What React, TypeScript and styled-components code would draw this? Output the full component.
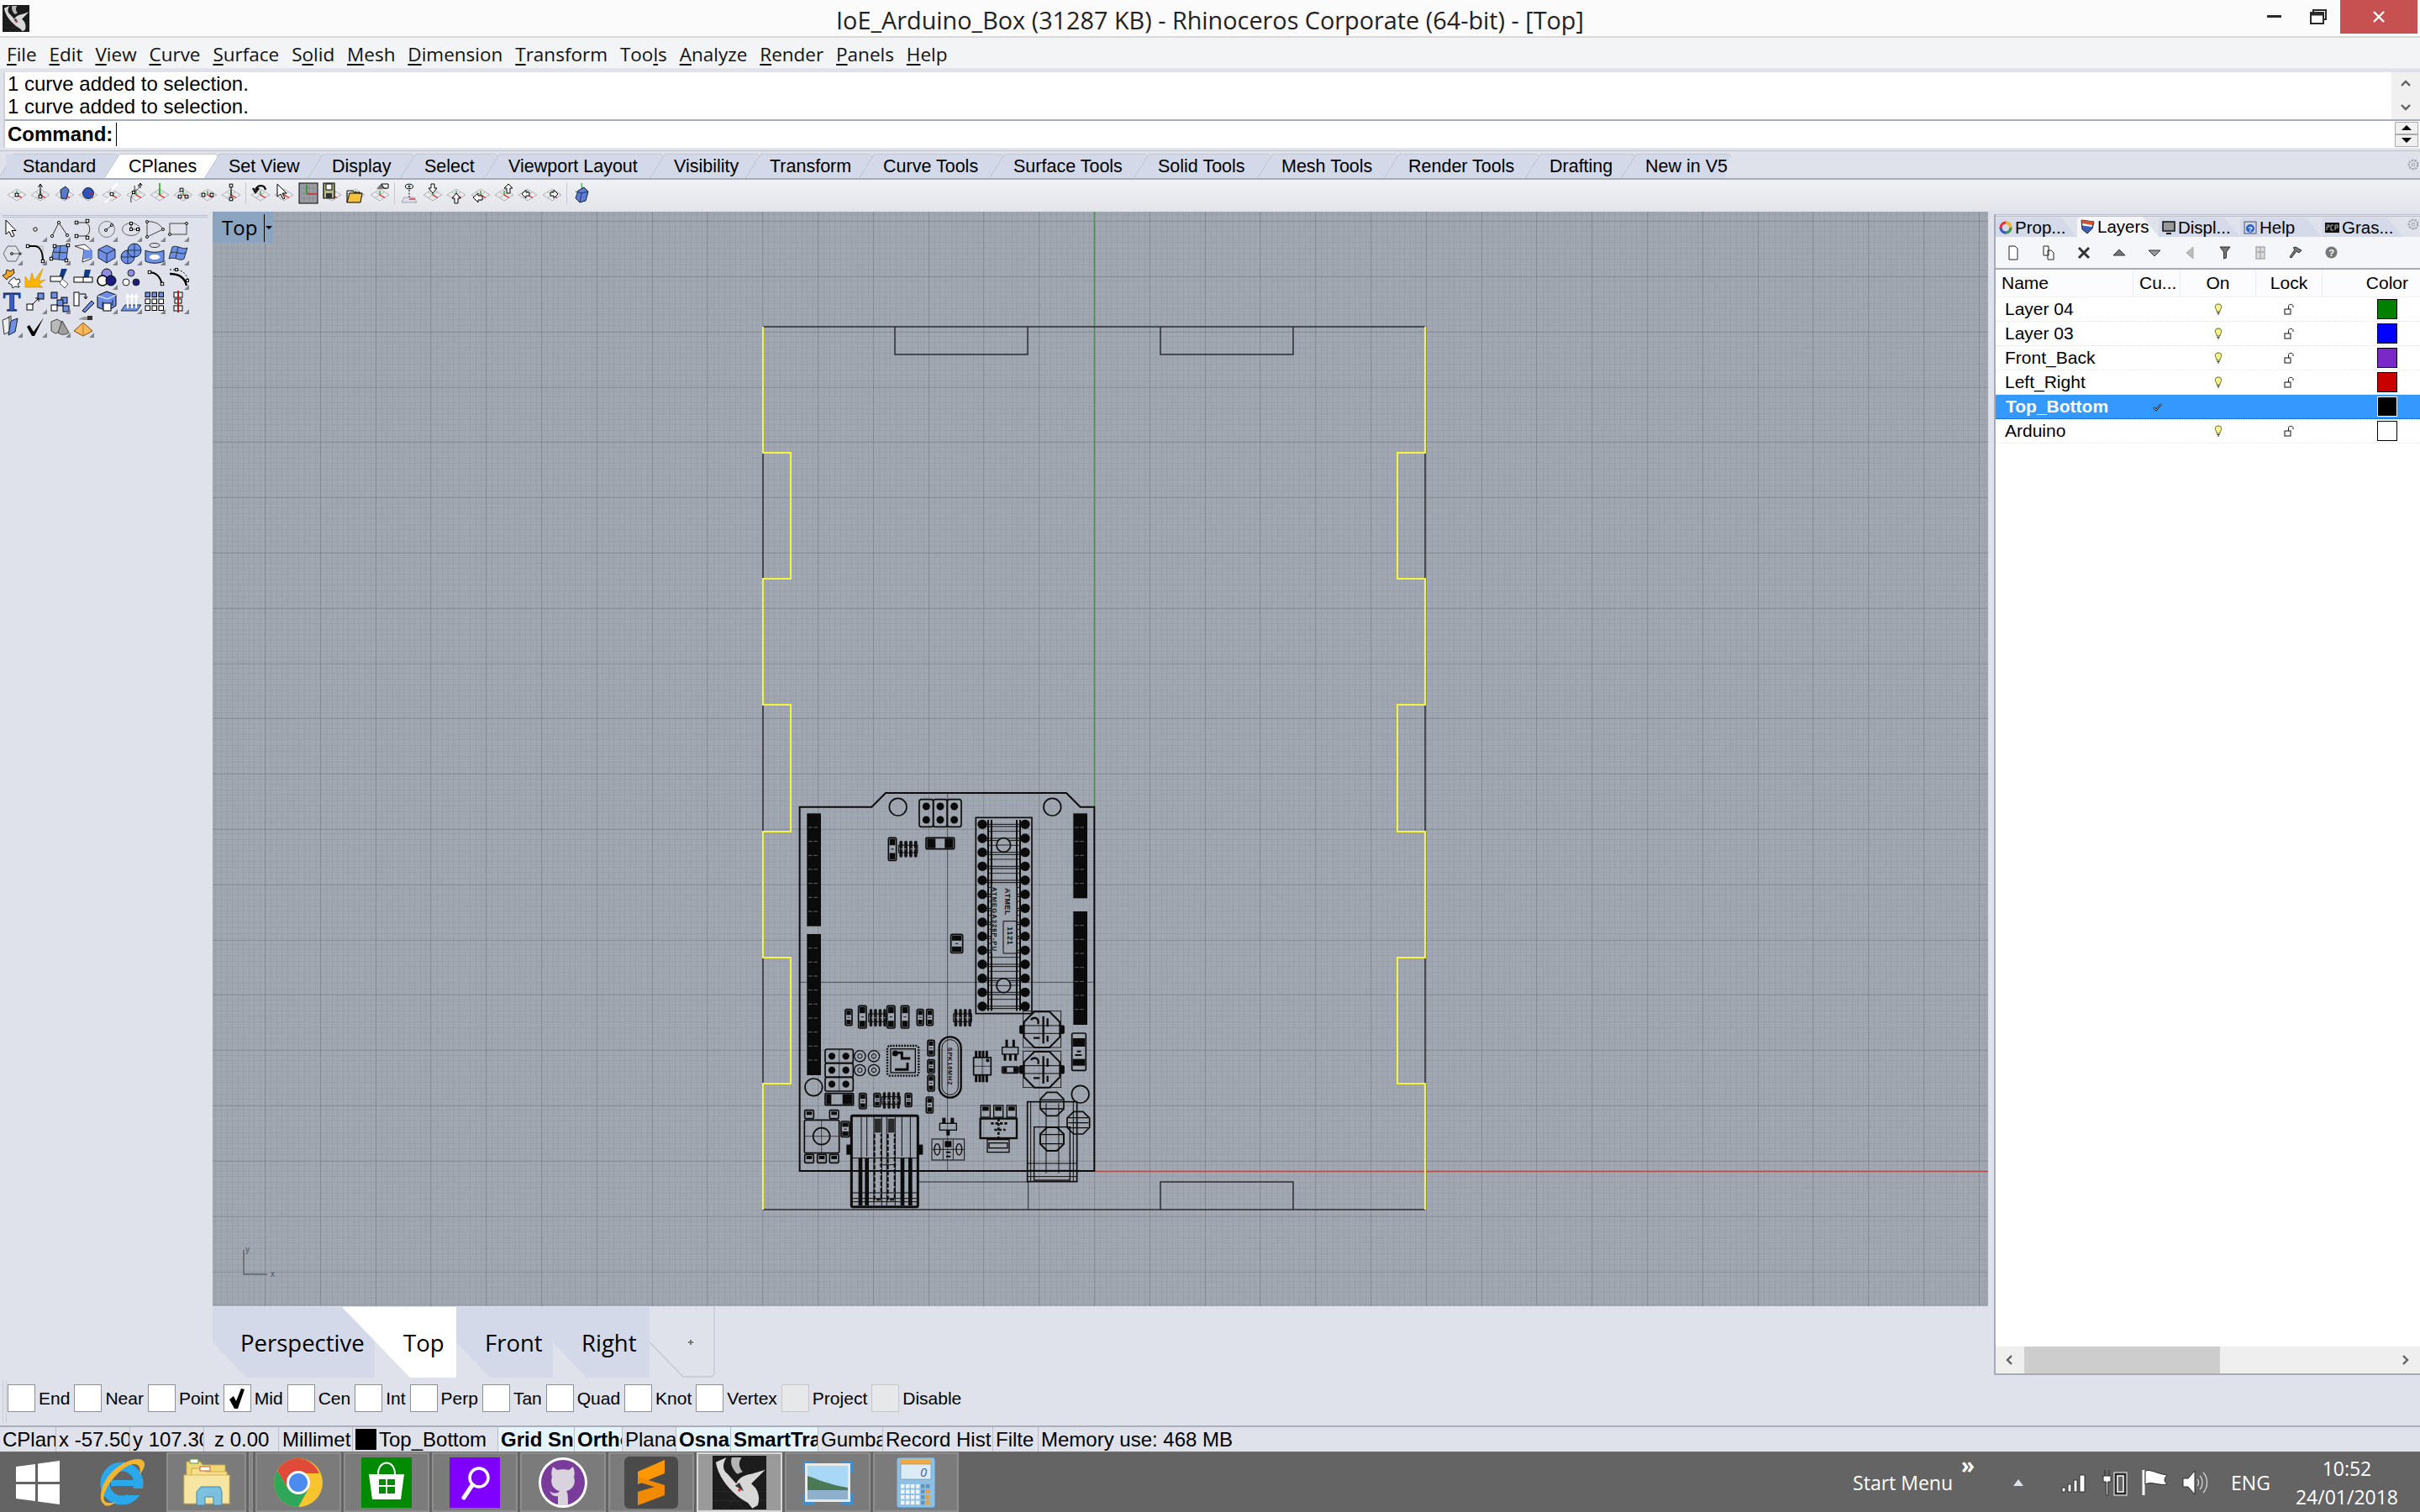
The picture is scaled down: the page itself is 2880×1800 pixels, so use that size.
import React from 'react';
import styled, { createGlobalStyle } from 'styled-components';

const GlobalStyle = createGlobalStyle`
  html, body {
    margin: 0;
    padding: 0;
    background: #dfe2ea;
    overflow: hidden;
  }
  * { box-sizing: border-box; }
`;

const Root = styled.div`
  display: flex;
  flex-direction: column;
  width: 2880px;
  height: 1800px;
  background: #dfe2ea;
  font-family: "Liberation Sans", Arial, sans-serif;
  color: #000;
  overflow: hidden;
`;

/* ---------- window chrome ---------- */
const TitleBar = styled.header`
  display: grid;
  grid-template-columns: 1fr auto 1fr;
  align-items: center;
  height: 45px;
  background: #fbfbfb;
  border-bottom: 2px solid #d8d8d8;
`;
const TitleLeft = styled.div`
  display: flex;
  padding-left: 3px;
`;
const TitleText = styled.div`
  font-family: "Open Sans", sans-serif;
  font-size: 28.8px;
  color: #222;
  white-space: nowrap;
  margin-top: 3px;
`;
const WindowButtons = styled.div`
  display: flex;
  justify-content: flex-end;
  align-self: start;
  padding-right: 3px;
`;
const WindowButton = styled.div<{ $close?: boolean }>`
  display: flex;
  align-items: center;
  justify-content: center;
  width: ${p => (p.$close ? '92px' : '52px')};
  height: 40px;
  background: ${p => (p.$close ? '#c75050' : 'transparent')};
`;

const MenuBar = styled.nav`
  display: flex;
  align-items: center;
  gap: 14.9px;
  height: 37px;
  padding: 2px 0 0 8px;
  background: #f3f4f6;
  border-bottom: 1px solid #e9e9e6;
  font-family: "Open Sans", sans-serif;
  font-size: 22.5px;
  color: #111;
`;
const MenuItem = styled.span`
  white-space: nowrap;
  u { text-underline-offset: 3px; }
`;

const CommandArea = styled.section`
  margin: 4px 0 0 4px;
  border-left: 2px solid #ccd0d8;
  background: #fff;
  height: 90px;
  display: flex;
  flex-direction: column;
`;
const History = styled.div`
  display: flex;
  height: 56px;
`;
const HistoryLines = styled.div`
  flex: 1;
  font-size: 24px;
  line-height: 27px;
  padding: 0 0 0 3px;
`;
const HistoryScroll = styled.div`
  width: 34px;
  background: #f0f0f0;
  display: flex;
  flex-direction: column;
  align-items: center;
  justify-content: space-around;
`;
const CommandLine = styled.div`
  display: flex;
  align-items: center;
  height: 33px;
  border-top: 2px solid #a8aeb8;
  padding-left: 3px;
  font-size: 24px;
  font-weight: 700;
`;
const Caret = styled.span`
  width: 1px;
  height: 28px;
  background: #000;
  margin-left: 4px;
`;
const Spinner = styled.div`
  margin-left: auto;
  margin-right: 2px;
  display: flex;
  flex-direction: column;
  width: 28px;
  height: 30px;
  border: 1px solid #adadad;
  background: #f0f0f0;
`;
const SpinHalf = styled.div<{ $down?: boolean }>`
  flex: 1;
  display: flex;
  align-items: center;
  justify-content: center;
  border-top: ${p => (p.$down ? '2px solid #adadad' : 'none')};
  &::after {
    content: '';
    border-left: 6px solid transparent;
    border-right: 6px solid transparent;
    ${p => (p.$down ? 'border-top: 6px solid #000;' : 'border-bottom: 6px solid #000;')}
  }
`;

const TabRow = styled.div`
  display: flex;
  align-items: flex-end;
  height: 38px;
  padding-left: 7px;
  padding-right: 4px;
  border-top: 3px solid #e1e4ea;
  border-bottom: 2px solid #a6acb8;
  background: #dfe2ea;
  position: relative;
  box-shadow: inset 0 1px 0 #bcc0cb;
`;
const RibbonTab = styled.div<{ $active?: boolean; $w: number; $square?: 'first' | 'last' }>`
  position: relative;
  display: flex;
  align-items: center;
  width: ${p => p.$w}px;
  height: 29px;
  padding: 2px 0 0 20px;
  font-size: 21.5px;
  white-space: nowrap;
  z-index: ${p => (p.$active ? 2 : 1)};
  &::before {
    content: '';
    position: absolute;
    inset: 0;
    transform: skewX(-32deg);
    background: ${p => (p.$active ? '#fff' : '#d3d9e8')};
    border-left: 1px solid #aab0c0;
    border-top: 1px solid #c4c9d6;
    border-top-right-radius: 5px;
    z-index: -1;
  }
  ${p =>
    p.$square
      ? `&::after {
          content: '';
          position: absolute;
          top: 1px;
          bottom: 0;
          width: 16px;
          background: #d3d9e8;
          z-index: -1;
          ${p.$square === 'first' ? 'left: 0;' : 'right: 0;'}
        }`
      : ''}
`;
const RibbonGear = styled.div`
  position: absolute;
  right: 0;
  top: 9px;
  display: flex;
`;

const Toolbar = styled.div`
  display: flex;
  align-items: center;
  height: 38px;
  padding: 0 0 6px 6px;
  background: linear-gradient(#f0f1f4, #e2e4ea);
`;
const ToolCell = styled.div`
  width: 28.3px;
  height: 26px;
  display: flex;
  align-items: center;
  justify-content: center;
`;
const ToolSep = styled.div`
  width: 1px;
  height: 26px;
  margin: 0 3px;
  background: #c5c8d0;
`;

/* ---------- main ---------- */
const Main = styled.main`
  display: flex;
  height: 1388px;
`;
const LeftPanel = styled.aside`
  width: 253px;
  padding: 4px 0 0 0;
`;
const GripLine = styled.div`
  width: 244px;
  margin-left: 3px;
  height: 3px;
  border-top: 1px solid #bbbfc9;
  border-bottom: 1px solid #bbbfc9;
`;
const ToolGrid = styled.div`
  display: grid;
  grid-template-columns: repeat(8, 28.3px);
  grid-auto-rows: 28.7px;
`;
const PanelTool = styled.div<{ $flyout?: boolean }>`
  position: relative;
  display: flex;
  align-items: center;
  justify-content: center;
  ${p =>
    p.$flyout
      ? `&::after {
          content: '';
          position: absolute;
          right: 1px;
          bottom: 0;
          border-left: 6px solid transparent;
          border-bottom: 6px solid #80838a;
        }`
      : ''}
`;

const Center = styled.div`
  display: flex;
  flex-direction: column;
  width: 2113px;
`;
const Viewport = styled.div`
  position: relative;
  height: 1303px;
  background-color: #a0a7b0;
  background-image:
    repeating-linear-gradient(90deg, transparent 0 62px, rgba(60, 64, 72, 0.22) 62px 63px, transparent 63px 65.8px),
    repeating-linear-gradient(0deg, transparent 0 40.5px, rgba(60, 64, 72, 0.22) 40.5px 41.5px, transparent 41.5px 65.8px),
    repeating-linear-gradient(90deg, transparent 0 3.4px, rgba(70, 76, 86, 0.08) 3.4px 4.4px, transparent 4.4px 6.58px),
    repeating-linear-gradient(0deg, transparent 0 2.4px, rgba(70, 76, 86, 0.08) 2.4px 3.4px, transparent 3.4px 6.58px);
  overflow: hidden;
`;
const ViewLabel = styled.div`
  position: absolute;
  left: 0;
  top: 0;
  width: 72px;
  height: 37px;
  background: #8ba4c0;
  border-bottom-right-radius: 4px;
  display: flex;
  align-items: center;
  padding-left: 11px;
  font-family: "Open Sans", sans-serif;
  font-size: 24px;
  color: #000;
`;
const LabelBar = styled.span`
  position: absolute;
  left: 61px;
  top: 3px;
  width: 1px;
  height: 33px;
  background: #000;
`;
const LabelArrow = styled.span`
  position: absolute;
  left: 63px;
  top: 17px;
  border-left: 4px solid transparent;
  border-right: 4px solid transparent;
  border-top: 4px solid #000;
`;
const CadCanvas = styled.svg`
  position: absolute;
  left: 0;
  top: 0;
  display: block;
`;

const ViewTabs = styled.div`
  display: flex;
  height: 85px;
  padding-top: 1px;
`;
const ViewTab = styled.div<{ $kind: 'first' | 'active' | 'plain' }>`
  position: relative;
  display: flex;
  align-items: center;
  height: 84px;
  font-family: "Open Sans", sans-serif;
  font-size: 27.5px;
  white-space: nowrap;
  background: ${p => (p.$kind === 'active' ? '#fff' : '#d3d9e8')};
  ${p =>
    p.$kind === 'first'
      ? `width: 193px; padding-left: 33px; clip-path: polygon(0 0, 100% 0, 100% 100%, 40px 100%, 0 42px);`
      : p.$kind === 'active'
        ? `width: 136px; margin-left: -39px; padding-left: 73px; z-index: 2; clip-path: polygon(0 0, 100% 0, 100% 100%, 81px 100%);`
        : `width: 115px; padding-left: 34px; clip-path: polygon(0 0, 100% 0, 100% 100%, 40px 100%, 0 42px);`}
`;
const PlusTab = styled.svg`
  display: block;
  width: 78px;
  height: 84px;
`;

const RightPanel = styled.aside`
  display: flex;
  flex-direction: column;
  width: 507px;
  margin-left: 7px;
  margin-top: 3px;
  height: 1382px;
  border-left: 2px solid #a5abb8;
  border-bottom: 2px solid #a5abb8;
  border-top: 0;
  position: relative;
`;
const PanelTabs = styled.div`
  display: flex;
  height: 27px;
  padding-top: 0;
  background: #dfe2ea;
  border-top: 3px double #bbbfc9;
  align-items: flex-end;
`;
const PanelTab = styled.div<{ $active?: boolean }>`
  position: relative;
  display: flex;
  align-items: center;
  gap: 3px;
  width: 97px;
  height: ${p => (p.$active ? '24px' : '23px')};
  padding-left: 4px;
  font-size: 20.5px;
  white-space: nowrap;
  background: ${p => (p.$active ? '#f5f6f9' : '#d5daea')};
  clip-path: polygon(0 3px, 3px 0, 78px 0, 100% 100%, 0 100%);
`;
const PanelGear = styled.div`
  position: absolute;
  right: 0;
  top: 4px;
  display: flex;
`;
const PanelTools = styled.div`
  display: flex;
  align-items: center;
  height: 39px;
  background: #f5f6f9;
  border-bottom: 2px solid #a5abb8;
`;
const PanelToolCell = styled.div`
  width: 42px;
  display: flex;
  justify-content: center;
  align-items: center;
`;
const LayerTable = styled.div`
  flex: 1;
  background: #fff;
`;
const LayerRow = styled.div<{ $header?: boolean; $selected?: boolean }>`
  display: grid;
  grid-template-columns: 164px 56px 90px 79px 116px;
  align-items: center;
  height: ${p => (p.$header ? '33px' : '29px')};
  font-size: 21px;
  background: ${p => (p.$selected ? '#3399ff' : p.$header ? '#fcfcfe' : '#fff')};
  color: ${p => (p.$selected ? '#fff' : '#000')};
  border-bottom: ${p => (p.$header ? '1px solid #eef0f5' : p.$selected ? '1px dotted #16407a' : '1px dotted #e4e4e4')};
  white-space: nowrap;
`;
const HeadCell = styled.div<{ $align?: string; $pad?: string }>`
  height: 100%;
  display: flex;
  align-items: center;
  justify-content: ${p => p.$align || 'flex-start'};
  padding: ${p => p.$pad || '0'};
  border-right: 1px solid #e8eef6;
  &:last-child { border-right: 0; }
`;
const NameCell = styled.div<{ $selected?: boolean }>`
  padding-left: 11px;
  ${p => (p.$selected ? 'font-weight: 700; padding-left: 12px;' : '')}
`;
const IconCell = styled.div`
  display: flex;
  justify-content: center;
  align-items: center;
`;
const ColorCell = styled.div`
  display: flex;
  justify-content: flex-end;
  padding-right: 27px;
`;
const Swatch = styled.div<{ $color: string; $light?: boolean }>`
  width: 24px;
  height: 24px;
  background: ${p => p.$color};
  border: 1px solid ${p => (p.$light ? '#fff' : '#000')};
`;
const HScroll = styled.div`
  display: flex;
  align-items: center;
  height: 32px;
  background: #efefef;
  margin-top: auto;
`;
const HArrow = styled.div`
  width: 34px;
  display: flex;
  justify-content: center;
`;
const HThumb = styled.div`
  width: 233px;
  height: 32px;
  background: #cdcdcd;
  margin-right: auto;
`;

/* ---------- osnap / status ---------- */
const OsnapRow = styled.div`
  position: relative;
  display: flex;
  align-items: center;
  height: 57px;
  padding: 0 0 8px 9px;
  font-size: 21px;
  &::before {
    content: '';
    position: absolute;
    left: 3px;
    top: 3px;
    bottom: 3px;
    width: 3px;
    border-left: 1px solid #c8ccd5;
    border-right: 1px solid #c8ccd5;
  }
`;
const SnapItem = styled.div`
  display: flex;
  align-items: center;
  gap: 4px;
  margin-right: 5px;
  white-space: nowrap;
`;
const SnapBox = styled.div<{ $disabled?: boolean }>`
  display: flex;
  align-items: center;
  justify-content: center;
  width: 33px;
  height: 33px;
  background: ${p => (p.$disabled ? '#e7e8ea' : '#fff')};
  border: 1px solid ${p => (p.$disabled ? '#c5c7cb' : '#8d9097')};
`;
const StatusBar = styled.div`
  display: flex;
  height: 31px;
  border-top: 2px solid #a9aeba;
  font-size: 24px;
  align-items: stretch;
`;
const StatusCell = styled.div<{ $w?: number; $on?: boolean; $fill?: boolean; $pad?: number }>`
  display: flex;
  align-items: center;
  gap: 3px;
  width: ${p => (p.$w ? `${p.$w}px` : 'auto')};
  flex: ${p => (p.$fill ? 1 : 'none')};
  padding-left: ${p => p.$pad ?? 3}px;
  overflow: hidden;
  white-space: nowrap;
  background: ${p => (p.$on ? '#e5f3fb' : 'transparent')};
  font-weight: ${p => (p.$on ? 700 : 400)};
  border-right: ${p => (p.$fill ? '0' : '1px solid #b9bdc8')};
`;
const LayerChip = styled.span`
  flex: none;
  width: 25px;
  height: 25px;
  background: #000;
`;

/* ---------- taskbar ---------- */
const Taskbar = styled.footer`
  display: flex;
  align-items: stretch;
  height: 72px;
  background: #646464;
  border-top: 1px solid #6f6f6f;
  padding-right: 26px;
`;
const TaskSlot = styled.div<{ $w: number }>`
  display: flex;
  align-items: center;
  justify-content: center;
  width: ${p => p.$w}px;
  padding-right: 6px;
`;
const TaskButton = styled.div<{ $w?: number; $active?: boolean; $gap?: number }>`
  display: flex;
  align-items: center;
  justify-content: center;
  width: ${p => p.$w || 102}px;
  margin-right: ${p => (p.$gap === undefined ? 3 : p.$gap)}px;
  background: ${p => (p.$active ? '#9a9a9a' : '#7b7b7b')};
  border: 2px solid ${p => (p.$active ? '#d8d8d8' : '#8e8e8e')};
`;
const Tray = styled.div`
  display: flex;
  align-items: center;
  margin-left: auto;
  color: #fff;
  font-family: "Open Sans", sans-serif;
  font-size: 23px;
`;
const TrayText = styled.span<{ $gap?: number }>`
  margin-right: ${p => p.$gap || 0}px;
  white-space: nowrap;
`;
const TrayChevron = styled.span`
  align-self: flex-start;
  margin: 2px 45px 0 10px;
  font-size: 26px;
  line-height: 26px;
  font-weight: 700;
`;
const TrayIcon = styled.div<{ $gap?: number }>`
  display: flex;
  margin-right: ${p => p.$gap || 0}px;
`;
const Clock = styled.div`
  display: flex;
  flex-direction: column;
  align-items: center;
  line-height: 34px;
  font-size: 23px;
`;

/* ---------- tile icons in the CPlanes toolbar ---------- */
const Tile = ({ children, plain }: { children?: React.ReactNode; plain?: boolean }) => (
  <svg width="24" height="26" viewBox="0 0 24 26">
    {!plain && (
      <g stroke="#9a9a9a" strokeWidth="0.7" fill="none">
        <path d="M1 15 L12 8 L23 15 L12 22 Z" />
        <path d="M6.5 11.5 L17.5 18.5 M12 8 L12 8 M6.5 18.5 L17.5 11.5" />
      </g>
    )}
    {!plain && (
      <g strokeWidth="1.2" fill="none">
        <path d="M12 15 L18 18.5" stroke="#d22" />
        <path d="M12 15 L12 10" stroke="#191" />
      </g>
    )}
    {children}
  </svg>
);
const sq = (x: number, y: number, s = 3.6) => (
  <rect x={x - s / 2} y={y - s / 2} width={s} height={s} fill="#fff" stroke="#000" strokeWidth="1" />
);

const toolbarGroups: React.ReactNode[][] = [
  [
    <Tile key="a">{sq(12, 15)}</Tile>,
    <Tile key="b"><path d="M12 15 V3 M9.5 6 L12 2 L14.5 6" stroke="#000" fill="none" />{sq(12, 17)}</Tile>,
    <Tile key="c"><path d="M7 9 L13 5 L17 9 L14 20 L8 19 Z" fill="#5a79c9" stroke="#123" strokeWidth="1" /></Tile>,
    <Tile key="d"><circle cx="12" cy="13" r="6.5" fill="#2d52b8" stroke="#123" /><path d="M12 13 h7" stroke="#d22" /></Tile>,
    <Tile key="e"><path d="M19 2 C8 8 16 16 4 24" stroke="#fff" strokeWidth="2.4" fill="none" />{sq(12, 14)}</Tile>,
    <Tile key="f"><path d="M6 24 C4 14 12 12 10 4 M11 10 C16 8 16 5 14 3" stroke="#333" fill="none" />{sq(9, 12, 3)}<path d="M17 7 V2 M15 4 L17 1 L19 4" stroke="#000" fill="none" /></Tile>,
    <Tile key="g"><path d="M12 15 V1" stroke="#191" strokeWidth="1.4" />{' '}</Tile>,
    <Tile key="h">{sq(10, 9)}{sq(8, 17)}{sq(16, 17)}</Tile>,
    <Tile key="i">{sq(7, 15)}{sq(17, 15)}</Tile>,
    <Tile key="j">{sq(12, 4)}{sq(12, 20)}<path d="M12 6 V18" stroke="#000" /></Tile>,
  ],
  [
    <Tile key="k"><path d="M6 9 C9 2 17 3 18 9 M3 7 L6 12 L10 7" stroke="#111" strokeWidth="2.4" fill="none" /></Tile>,
    <Tile key="l"><path d="M4 2 V17 L8 14 L11 20 L13 19 L10 13 L15 13 Z" fill="#fff" stroke="#000" /></Tile>,
    <Tile key="m" plain><rect x="1" y="1" width="22" height="24" fill="#9a9ea4" stroke="#000" /><path d="M1 7 H23 M1 13 H23 M1 19 H23 M7 1 V25 M13 1 V25 M18 1 V25" stroke="#808389" strokeWidth="0.6" /><path d="M10 14 H22" stroke="#d22" strokeWidth="1.4" /><path d="M10 14 V3" stroke="#191" strokeWidth="1.4" /></Tile>,
    <Tile key="n"><path d="M2 1 H15 V19 H2 Z" fill="#b8b88a" stroke="#000" strokeWidth="1.2" /><rect x="5" y="2" width="7" height="7" fill="#fff" stroke="#000" /><rect x="5" y="13" width="7" height="6" fill="#333" /></Tile>,
    <Tile key="o"><path d="M2 24 L5 13 H20 L18 24 Z" fill="#f5c33b" stroke="#000" /><path d="M2 24 V10 H9 L10 12 H17 V14" fill="none" stroke="#000" /></Tile>,
    <Tile key="p"><path d="M8 8 L13 2 L22 3 L20 8 Z" fill="#777" /><path d="M14 2 L22 2 L22 7 L17 7 Z" fill="#fff" stroke="#000" /></Tile>,
  ],
  [
    <Tile key="q" plain><ellipse cx="12" cy="5" rx="4.5" ry="2.8" fill="#fff" stroke="#000" /><circle cx="12" cy="5" r="1.6" fill="#246" /><path d="M12 9 V20" stroke="#000" strokeDasharray="2 1.5" /><path d="M3 24 L6 18 H18 L21 24 Z" stroke="#888" fill="#dde" strokeWidth="0.7" /><path d="M12 20 H19" stroke="#d22" strokeWidth="1.3" /></Tile>,
    <Tile key="r"><path d="M10 2 H14 V7 H17 L12 13 L7 7 H10 Z" fill="#fff" stroke="#000" /></Tile>,
    <Tile key="s"><path d="M12 13 L7 19 H10 V25 H14 V19 H17 Z" fill="#fff" stroke="#000" /></Tile>,
    <Tile key="t"><path d="M3 18 L9 13 V16 H14 V21 H9 V24 Z" fill="#fff" stroke="#000" /></Tile>,
    <Tile key="u"><path d="M17 2 L22 7 L19 7 L19 13 L15 13 L15 7 L12 7 Z" fill="#fff" stroke="#000" /></Tile>,
    <Tile key="v"><path d="M5 14 L10 9 V12 H14 V16 H10 V19 Z" fill="#fff" stroke="#000" /></Tile>,
    <Tile key="w"><path d="M19 14 L14 9 V12 H10 V16 H14 V19 Z" fill="#fff" stroke="#000" /></Tile>,
  ],
  [
    <Tile key="x" plain><path d="M12 1 L13 12" stroke="#191" /><path d="M12 9 L20 14" stroke="#d22" /><path d="M8 10 L15 6 L20 11 L17 22 L10 24 L5 19 Z" fill="#5e7ed6" stroke="#123" /><path d="M10 24 L12 13 L20 11 M12 13 L5 11" stroke="#123" strokeWidth="0.8" fill="none" /></Tile>,
  ],
];

/* ---------- left panel icons ---------- */
const P = ({ children }: { children: React.ReactNode }) => (
  <svg width="26" height="26" viewBox="0 0 26 26">{children}</svg>
);
const blue = '#6e8fe6';
const panelTools: { icon: React.ReactNode; flyout: boolean }[] = [
  { flyout: false, icon: <P><path d="M6 2 V19 L10 15.5 L13 22 L16 20.5 L13 14.5 L18 14.5 Z" fill="#fff" stroke="#000" /></P> },
  { flyout: true, icon: <P><circle cx="13" cy="13" r="2.2" fill="#fff" stroke="#000" /></P> },
  { flyout: true, icon: <P><path d="M4 21 L12 5 L22 20" fill="none" stroke="#333" /><circle cx="4" cy="21" r="1.6" fill="#fff" stroke="#000" /><circle cx="12" cy="5" r="1.6" fill="#fff" stroke="#000" /><circle cx="22" cy="20" r="1.6" fill="#fff" stroke="#000" /></P> },
  { flyout: true, icon: <P><path d="M5 5 H14 C23 5 23 21 14 21 H5" fill="none" stroke="#333" />{sq(5, 5, 3.4)}{sq(5, 21, 3.4)}{sq(18, 3, 3.4)}{sq(18, 23, 3.4)}</P> },
  { flyout: true, icon: <P><circle cx="13" cy="13" r="9.5" fill="none" stroke="#777" /><path d="M12 14 L19 8" stroke="#333" /><circle cx="12" cy="14" r="1.5" fill="#fff" stroke="#000" /><circle cx="19" cy="8" r="1.5" fill="#fff" stroke="#000" /></P> },
  { flyout: true, icon: <P><ellipse cx="13" cy="13" rx="10.5" ry="7.5" fill="none" stroke="#666" /><path d="M13 6 V13 H22" stroke="#333" fill="none" />{sq(13, 6, 3)}{sq(13, 13, 3)}{sq(21, 13, 3)}</P> },
  { flyout: true, icon: <P><path d="M4 4 V22 L23 13 C19 6 12 3 4 4 Z" fill="none" stroke="#444" /><circle cx="4" cy="4" r="1.5" fill="#fff" stroke="#000" /><circle cx="4" cy="22" r="1.5" fill="#fff" stroke="#000" /><circle cx="23" cy="13" r="1.5" fill="#fff" stroke="#000" /></P> },
  { flyout: true, icon: <P><rect x="3" y="6" width="20" height="13" fill="none" stroke="#444" /><circle cx="3" cy="19" r="1.5" fill="#fff" stroke="#000" /><circle cx="23" cy="6" r="1.5" fill="#fff" stroke="#000" /></P> },

  { flyout: true, icon: <P><path d="M8 4 H18 L23 13 L18 22 H8 L3 13 Z" fill="none" stroke="#666" /><path d="M13 13 H23" stroke="#555" /><circle cx="13" cy="13" r="1.4" fill="#fff" stroke="#000" /><circle cx="23" cy="13" r="1.2" fill="#fff" stroke="#000" /></P> },
  { flyout: true, icon: <P><path d="M4 4 H22 V22" fill="none" stroke="#aaa" /><path d="M4 4 H12 C19 4 22 12 22 22" fill="none" stroke="#000" strokeWidth="2" />{sq(4, 4, 3.4)}{sq(22, 22, 3.4)}</P> },
  { flyout: true, icon: <P><path d="M7 4 L23 3 L21 21 L3 19 Z" fill={blue} stroke="#233" /><path d="M14 3 L12 20 M5 11 L22 12" stroke="#233" />{sq(7, 4, 3.4)}{sq(23, 3, 3.4)}{sq(21, 21, 3.4)}{sq(3, 19, 3.4)}</P> },
  { flyout: true, icon: <P><path d="M3 4 L15 2 L23 9 L23 19 L12 23 L14 8 Z" fill="#fff" stroke="#333" /><path d="M14 8 L23 9 V18 L13 20 Z" fill={blue} /></P> },
  { flyout: true, icon: <P><path d="M13 3 L23 8 V18 L13 24 L3 18 V8 Z" fill={blue} stroke="#223" /><path d="M3 8 L13 13 L23 8 M13 13 V24" stroke="#223" fill="none" /></P> },
  { flyout: true, icon: <P><circle cx="9" cy="17" r="8" fill={blue} stroke="#123" /><circle cx="17" cy="9" r="8" fill={blue} stroke="#123" /><path d="M1 17 H17 M9 9 V25 M9 9 H25 M17 1 V17" stroke="#123" strokeWidth="0.8" /></P> },
  { flyout: true, icon: <P><ellipse cx="13" cy="3" rx="6" ry="2.5" fill="none" stroke="#333" /><path d="M2 9 C8 12 18 12 24 9 V22 C18 25 8 25 2 22 Z" fill={blue} stroke="#123" /><ellipse cx="13" cy="17" rx="6" ry="2.5" fill="#fff" stroke="#fff" /></P> },
  { flyout: true, icon: <P><path d="M6 5 C12 2 18 9 24 6 L20 19 C15 23 10 16 2 19 Z" fill={blue} stroke="#233" /><path d="M13 5 L10 18 M4 12 C10 9 16 15 22 12" stroke="#233" fill="none" /></P> },

  { flyout: false, icon: <P><path d="M2 10 L6 8 L7 3 L12 5 L15 2 L16 7 L12 11 L9 12 L7 15 Z" fill="#f5a623" stroke="#222" /><path d="M12 15 L16 12 L18 15 L22 14 L23 18 L20 20 L22 24 L17 23 L14 25 L13 21 L9 19 Z" fill="#fff" stroke="#222" /></P> },
  { flyout: false, icon: <P><path d="M1 24 L1 11 L6 18 L9 7 L12 16 L22 2 L17 17 L25 15 L17 21 L22 24 Z" fill="#ffb400" stroke="#c98c00" strokeWidth="0.6" /></P> },
  { flyout: false, icon: <P><path d="M15 2 H22 L17 14 H12 Z" fill="#123a86" /><rect x="2" y="11" width="14" height="6" fill="#fff" stroke="#000" /><path d="M16 14 L23 20 L19 25 L13 19 Z" fill="#fff" stroke="#555" /></P> },
  { flyout: false, icon: <P><path d="M15 3 H22 L19 14 H13 Z" fill="#123a86" /><rect x="2" y="12" width="22" height="6" fill="#fff" stroke="#000" /><path d="M13 12 V18" stroke="#000" /></P> },
  { flyout: true, icon: <P><circle cx="13" cy="8" r="6" fill="#8d8de6" stroke="#000" /><circle cx="8" cy="16" r="6" fill="#fff" stroke="#000" strokeWidth="1.6" /><circle cx="18" cy="16" r="6" fill="#1b1b80" stroke="#000" /></P> },
  { flyout: false, icon: <P><circle cx="13" cy="7" r="4" fill="#8d8de6" stroke="#222" /><circle cx="7" cy="18" r="4" fill="#fff" stroke="#222" /><circle cx="19" cy="18" r="4" fill="#1b1b80" stroke="#222" /></P> },
  { flyout: false, icon: <P><path d="M6 6 C15 6 20 12 22 21" fill="none" stroke="#000" strokeWidth="2" />{sq(7, 6, 3.4)}{sq(22, 20, 3.4)}</P> },
  { flyout: true, icon: <P><path d="M3 8 C14 8 21 13 23 22" fill="none" stroke="#000" strokeWidth="2.4" /><path d="M3 3 H9 M12 3 C20 5 24 10 25 17" fill="none" stroke="#000" strokeDasharray="2 2" />{sq(11, 3, 3)}{sq(24, 16, 3)}</P> },

  { flyout: false, icon: <P><text x="13" y="24" textAnchor="middle" fontFamily="'Liberation Serif', serif" fontWeight="700" fontSize="31" fill="#3b5ec0" stroke="#0a1a50" strokeWidth="0.8">T</text></P> },
  { flyout: true, icon: <P><rect x="16" y="3" width="7" height="7" fill={blue} stroke="#000" /><rect x="3" y="16" width="7" height="7" fill="#fff" stroke="#000" /><path d="M9 17 L17 9 M13 9 H17 V13" fill="none" stroke="#000" /></P> },
  { flyout: true, icon: <P><rect x="3" y="2" width="7" height="7" fill={blue} stroke="#000" /><rect x="15" y="8" width="7" height="7" fill={blue} stroke="#000" /><rect x="10" y="11" width="7" height="7" fill={blue} stroke="#000" /><rect x="3" y="17" width="7" height="7" fill="#fff" stroke="#000" /><rect x="17" y="18" width="7" height="7" fill={blue} stroke="#000" /></P> },
  { flyout: false, icon: <P><rect x="2" y="2" width="6" height="16" fill="#fff" stroke="#000" /><path d="M12 24 L23 12 L26 15 L15 26 Z" fill={blue} stroke="#000" /><path d="M9 4 H16 V9 M14 7 L16 10 L18 7" fill="none" stroke="#000" /></P> },
  { flyout: true, icon: <P><path d="M2 6 L13 1 L24 5 V18 L14 24 L2 20 Z" fill={blue} stroke="#000" /><path d="M2 6 L14 10 L24 5" stroke="#fff" fill="none" /><path d="M8 13 V20 M20 11 V18" stroke="#123" /><rect x="9" y="15" width="9" height="9" fill="#fff" stroke="#000" /></P> },
  { flyout: true, icon: <P><path d="M1 24 L6 17 H25 L20 24 Z" fill={blue} stroke="#234" /><path d="M9 21 V6 M14 21 V6 M19 21 V6" stroke="#fff" strokeWidth="2.2" /><path d="M6 8 L9 3 L12 8 M11 8 L14 3 L17 8 M16 8 L19 3 L22 8" fill="#fff" /></P> },
  { flyout: true, icon: <P><g fill="#fff" stroke="#000">{[2, 10, 18].map(y => [2, 10, 18].map(x => <rect key={`${x}${y}`} x={x} y={y} width="5.5" height="5.5" fill={y === 2 ? blue : '#fff'} />))}</g></P> },
  { flyout: true, icon: <P><rect x="8" y="2" width="10" height="6" fill="#fff" stroke="#000" /><rect x="9" y="10" width="8" height="5" fill="#fff" stroke="#000" /><rect x="8" y="18" width="10" height="6" fill="#fff" stroke="#000" /><path d="M13 0 V26" stroke="#c01818" strokeWidth="2" /></P> },

  { flyout: true, icon: <P><path d="M2 6 L10 3 V20 L4 23 Z" fill="#eee" stroke="#333" /><path d="M12 7 L20 4 L17 20 L9 24 Z" fill={blue} stroke="#123" /><path d="M8 3 L12 1 V6" fill="none" stroke="#333" /></P> },
  { flyout: true, icon: <P><path d="M3 14 L6 12 L11 20 L23 3 L12 25 L9 25 Z" fill="#000" /></P> },
  { flyout: true, icon: <P><path d="M3 8 L10 5 L15 8 V19 L8 22 L3 19 Z" fill="#b9b9b9" stroke="#444" /><path d="M16 7 L24 21 C20 24 14 24 11 21 Z" fill="#9e9e9e" stroke="#444" /></P> },
  { flyout: true, icon: <P><path d="M13 9 L24 19 L13 25 L2 19 Z" fill="#f8b85c" stroke="#7a4a10" /><path d="M13 9 V25" stroke="#b97a20" /><path d="M7 5 L14 2 H19 V6 H14 Z" fill="#999" /><path d="M18 1 H24 V6 H18 Z" fill="#333" /></P> },
];

/* ---------- the drawing in the viewport ---------- */
const octa = (cx: number, cy: number, r: number) => {
  const a = r * 0.42;
  return `${cx - a},${cy - r} ${cx + a},${cy - r} ${cx + r},${cy - a} ${cx + r},${cy + a} ${cx + a},${cy + r} ${cx - a},${cy + r} ${cx - r},${cy + a} ${cx - r},${cy - a}`;
};

const PinHeader = ({ x, y, h }: { x: number; y: number; h: number }) => {
  const n = Math.round(h / 50);
  return (
    <g>
      <rect x={x} y={y} width="50" height={h} fill="#0b0b0b" stroke="none" />
      {Array.from({ length: n - 1 }, (_, i) => (
        <path key={i} d={`M${x + 5} ${y + 50 * (i + 1)} h40`} stroke="#8a8f96" strokeWidth="2" strokeDasharray="14 5 14" />
      ))}
    </g>
  );
};

const Smd = ({ x, y, w, h }: { x: number; y: number; w: number; h: number }) => (
  <g>
    <rect x={x} y={y} width={w} height={h} rx="5" fill="none" strokeWidth="5" />
    <rect x={x + 4} y={y + 4} width={w - 8} height={h * 0.28} fill="#0b0b0b" stroke="none" />
    <rect x={x + 4} y={y + h * 0.72 - 4} width={w - 8} height={h * 0.28} fill="#0b0b0b" stroke="none" />
    <path d={`M${x + w / 2 - 5} ${y + h / 2} h10`} strokeWidth="3" />
  </g>
);

const Soic = ({ x, y, w, h }: { x: number; y: number; w: number; h: number }) => {
  const legs = 4;
  return (
    <g>
      {Array.from({ length: legs }, (_, i) => (
        <rect key={i} x={x + 4 + i * (w / legs)} y={y} width={w / legs - 6} height={h} rx="6" fill="#151515" stroke="none" />
      ))}
      <path d={`M${x} ${y + h / 2} h${w}`} stroke="#9ea5ae" strokeWidth="4" strokeDasharray="5 6" />
      <rect x={x + 1} y={y + h * 0.28} width={w - 2} height={h * 0.44} strokeWidth="3" />
    </g>
  );
};

const Board = () => {
  const chipRows = Array.from({ length: 14 }, (_, i) => 124 + i * 50);
  return (
    <g transform="translate(920,940) scale(0.33333)" fill="none" stroke="#0b0b0b" strokeWidth="5">
      {/* centre lines */}
      <path d="M95 688 H1147 M623 12 V1362" strokeWidth="2.5" stroke="#3c4046" />
      <path d="M517 1401 H908 M911 1401 V1500" strokeWidth="3" stroke="#2a2c30" />
      {/* outline */}
      <path d="M95 62 H352 L402 12 H1047 L1097 62 H1147 V1362 H95 Z" strokeWidth="6" />
      {/* mounting holes */}
      <circle cx="446" cy="62" r="31" />
      <circle cx="997" cy="62" r="31" />
      <circle cx="145" cy="1063" r="31" />
      <circle cx="1097" cy="1088" r="31" />
      {/* headers */}
      <PinHeader x={121} y={85} h={403} />
      <PinHeader x={121} y={516} h={504} />
      <PinHeader x={1072} y={85} h={303} />
      <PinHeader x={1072} y={435} h={405} />
      {/* top ICSP */}
      {[522, 572, 622].map(x => (
        <g key={x}>
          <rect x={x} y="35" width="50" height="98" rx="8" />
          <circle cx={x + 25} cy="60" r="11" fill="#0b0b0b" />
          <circle cx={x + 25} cy="108" r="11" fill="#0b0b0b" />
        </g>
      ))}
      {/* chip and socket */}
      <rect x="724" y="100" width="200" height="700" />
      {chipRows.map(y => (
        <g key={y}>
          <circle cx="747" cy={y} r="17" fill="#0b0b0b" stroke="none" />
          <circle cx="900" cy={y} r="17" fill="#0b0b0b" stroke="none" />
          <path d={`M747 ${y} H900 M747 ${y + 8} H900`} strokeWidth="3" />
          <path d={`M768 ${y + 25} H882`} strokeWidth="2.5" />
        </g>
      ))}
      <path d="M768 108 V790 M780 108 V790 M870 108 V790 M882 108 V790" strokeWidth="6" />
      <rect x="782" y="340" width="86" height="245" fill="#9ea5ae" stroke="none" />
      <circle cx="823" cy="198" r="25" fill="#9ea5ae" />
      <circle cx="823" cy="700" r="25" fill="#9ea5ae" />
      <path d="M798 198 H848 M798 700 H848" strokeWidth="2.5" />
      <text transform="translate(783 348) rotate(90)" fontFamily="'Liberation Sans', sans-serif" fontWeight="700" fontSize="23" fill="#0b0b0b" stroke="none" textLength="228">ATMEGA328P-PU</text>
      <text transform="translate(828 352) rotate(90)" fontFamily="'Liberation Sans', sans-serif" fontWeight="700" fontSize="26" fill="#0b0b0b" stroke="none" textLength="96">ATMEL</text>
      <text transform="translate(836 490) rotate(90)" fontFamily="'Liberation Sans', sans-serif" fontWeight="700" fontSize="26" fill="#0b0b0b" stroke="none" textLength="64">1121</text>
      <path d="M822 470 H870 V585 H822 Z" strokeWidth="3" />
      {/* small parts upper */}
      <Smd x={412} y={172} w={28} h={81} />
      <Soic x={447} y={182} w={70} h={60} />
      <rect x="546" y="172" width="101" height="40" rx="3" strokeWidth="5" />
      <rect x="550" y="175" width="30" height="34" fill="#0b0b0b" stroke="none" />
      <rect x="613" y="175" width="30" height="34" fill="#0b0b0b" stroke="none" />
      <Smd x={635} y={517} w={42} h={66} />
      {/* parts row */}
      <Smd x={258} y={785} w={24} h={57} />
      <Smd x={305} y={772} w={28} h={80} />
      <Soic x={340} y={783} w={66} h={64} />
      <Smd x={407} y={772} w={28} h={80} />
      <Smd x={457} y={772} w={28} h={80} />
      <Smd x={514} y={785} w={23} h={57} />
      <Smd x={548} y={785} w={23} h={57} />
      <Soic x={643} y={783} w={67} h={64} />
      {/* crystal */}
      <rect x="593" y="883" width="78" height="217" rx="39" strokeWidth="7" />
      <rect x="603" y="893" width="58" height="197" rx="29" strokeWidth="3" />
      <text transform="translate(624 920) rotate(90)" fontFamily="'Liberation Sans', sans-serif" fontWeight="700" fontSize="22" fill="#0b0b0b" stroke="none" textLength="135">SPK16MHZ</text>
      <Smd x={552} y={895} w={24} h={56} />
      <Smd x={552} y={965} w={24} h={47} />
      <Smd x={552} y={1020} w={24} h={57} />
      <Smd x={547} y={1098} w={24} h={57} />
      {/* QFP */}
      <rect x="408" y="915" width="112" height="107" rx="10" strokeWidth="7" strokeDasharray="6 4" />
      <rect x="420" y="926" width="88" height="85" strokeWidth="4" />
      <path d="M430 940 h30 v20 h30 M435 1000 h45 v-25" strokeWidth="9" />
      <circle cx="436" cy="942" r="8" fill="#0b0b0b" />
      {/* ICSP lower */}
      {[927, 977, 1027].map(y => (
        <g key={y}>
          <rect x="186" y={y} width="100" height="50" rx="7" />
          <path d={`M236 ${y} v50`} strokeWidth="2" />
          <circle cx="210" cy={y + 25} r="10" fill="#0b0b0b" />
          <circle cx="260" cy={y + 25} r="10" fill="#0b0b0b" />
        </g>
      ))}
      {[[310, 952], [360, 952], [310, 1002], [360, 1002]].map(([cx, cy]) => (
        <g key={`${cx}${cy}`}>
          <circle cx={cx} cy={cy} r="20" strokeWidth="4" />
          <circle cx={cx} cy={cy} r="8" strokeWidth="3" />
        </g>
      ))}
      {/* lower parts */}
      <rect x="186" y="1085" width="101" height="42" rx="3" strokeWidth="5" />
      <rect x="190" y="1088" width="18" height="36" fill="#0b0b0b" stroke="none" />
      <rect x="248" y="1088" width="36" height="36" fill="#0b0b0b" stroke="none" />
      <Smd x={308} y={1085} w={25} h={55} />
      <Smd x={360} y={1085} w={23} h={47} />
      <Soic x={388} y={1080} w={67} h={60} />
      <Smd x={472} y={1085} w={23} h={47} />
      {/* reset button */}
      <rect x="112" y="1180" width="124" height="118" rx="6" strokeWidth="5" />
      <circle cx="173" cy="1238" r="30" strokeWidth="5" />
      <path d="M112 1238 H236 M173 1180 V1298" strokeWidth="2" />
      {[[113, 1145], [202, 1145], [113, 1303], [158, 1303], [202, 1303]].map(([x, y]) => (
        <g key={`${x}${y}`}>
          <rect x={x} y={y} width="32" height="30" rx="4" strokeWidth="5" />
          <rect x={x + 6} y={y + 5} width="20" height="12" fill="#0b0b0b" stroke="none" />
        </g>
      ))}
      <Smd x={243} y={1185} w={30} h={55} />
      {/* USB */}
      <rect x="280" y="1165" width="237" height="325" rx="5" strokeWidth="9" />
      <rect x="262" y="1268" width="18" height="36" fill="#0b0b0b" stroke="none" />
      <rect x="517" y="1268" width="18" height="36" fill="#0b0b0b" stroke="none" />
      <path d="M315 1170 V1485 M335 1170 V1310 M360 1170 V1485 M388 1170 V1485 M406 1170 V1485 M436 1170 V1485 M460 1170 V1310 M490 1170 V1485" strokeWidth="3" />
      <path d="M280 1460 H517 M280 1440 H517 M280 1472 H517 M280 1316 H517 M380 1340 H440" strokeWidth="3" />
      <path d="M312 1316 V1485 M335 1316 V1485 M462 1316 V1485 M490 1316 V1485" strokeWidth="14" />
      <rect x="362" y="1175" width="24" height="50" fill="#2a2a2a" stroke="none" />
      <rect x="410" y="1175" width="24" height="50" fill="#2a2a2a" stroke="none" />
      <path d="M362 1230 V1465 H386 V1230 M410 1230 V1465 H434 V1230" strokeWidth="6" strokeDasharray="16 6" />
      {/* power jack */}
      <rect x="908" y="1115" width="177" height="285" strokeWidth="5" />
      <rect x="932" y="1205" width="128" height="190" strokeWidth="4" />
      <path d="M908 1335 H1085 M908 1360 H1085 M908 1382 H1085 M920 1115 V1400 M1072 1115 V1400 M975 1120 V1370 M1020 1120 V1370" strokeWidth="3" />
      <polygon points={octa(996, 1123, 42)} strokeWidth="5" />
      <polygon points={octa(996, 1248, 42)} strokeWidth="6" />
      <polygon points={octa(1090, 1190, 40)} strokeWidth="5" />
      <path d="M1054 1172 H1126 M1054 1190 H1126 M1054 1208 H1126 M954 1108 H1038 M954 1140 H1038 M954 1232 H1038 M954 1265 H1038" strokeWidth="4" />
      {/* capacitors */}
      {[[960, 857], [960, 1000]].map(([cx, cy]) => (
        <g key={cy}>
          <rect x={cx - 67} y={cy - 66} width="135" height="130" strokeWidth="2.5" />
          <polygon points={octa(cx, cy, 64)} strokeWidth="6" />
          <rect x={cx - 79} y={cy - 14} width="158" height="28" rx="3" strokeWidth="3" />
          <rect x={cx - 79} y={cy - 14} width="12" height="28" fill="#0b0b0b" stroke="none" />
          <rect x={cx + 67} y={cy - 14} width="12" height="28" fill="#0b0b0b" stroke="none" />
          <path d={`M${cx - 40} ${cy - 35} C${cx - 18} ${cy - 52} ${cx - 8} ${cy - 30} ${cx - 15} ${cy - 20} M${cx + 5} ${cy - 48} V${cy + 50} M${cx - 30} ${cy + 30} h22 M${cx + 20} ${cy - 40} v30 M${cx + 20} ${cy + 22} v22`} strokeWidth="7" />
        </g>
      ))}
      {/* right side small parts */}
      <rect x="1067" y="870" width="50" height="133" rx="5" strokeWidth="5" />
      <rect x="1070" y="888" width="44" height="30" fill="#0b0b0b" stroke="none" />
      <rect x="1070" y="962" width="44" height="24" fill="#0b0b0b" stroke="none" />
      <path d="M1085 935 h14 M1078 948 h24" strokeWidth="6" />
      <rect x="716" y="957" width="62" height="62" strokeWidth="5" />
      <path d="M725 933 V957 M738 933 V957 M750 933 V957 M763 933 V957 M725 1019 V1045 M738 1019 V1045 M750 1019 V1045 M763 1019 V1045" strokeWidth="9" />
      <path d="M716 988 H778 M747 957 V1019" strokeWidth="2" />
      <circle cx="766" cy="967" r="4" fill="#0b0b0b" />
      <rect x="818" y="920" width="57" height="25" strokeWidth="4" />
      <path d="M834 893 V920 M859 893 V920 M828 945 V968 M847 945 V968 M866 945 V968" strokeWidth="9" />
      <rect x="818" y="990" width="58" height="22" rx="3" strokeWidth="5" />
      <rect x="821" y="992" width="14" height="18" fill="#0b0b0b" stroke="none" />
      <rect x="858" y="992" width="15" height="18" fill="#0b0b0b" stroke="none" />
      {/* regulator */}
      <rect x="740" y="1175" width="130" height="70" strokeWidth="7" />
      {[742, 788, 835].map(x => (
        <g key={x}>
          <rect x={x} y="1128" width="33" height="42" strokeWidth="4" />
          <rect x={x + 5} y="1132" width="23" height="15" fill="#0b0b0b" stroke="none" />
        </g>
      ))}
      <path d="M778 1192 h60 M790 1215 h40 M805 1175 V1245" strokeWidth="8" strokeDasharray="10 6" />
      <rect x="765" y="1250" width="78" height="45" strokeWidth="4" />
      <rect x="771" y="1262" width="66" height="18" strokeWidth="4" />
      <rect x="595" y="1192" width="60" height="24" strokeWidth="4" />
      <path d="M610 1172 V1192 M640 1172 V1192 M625 1216 V1235" strokeWidth="12" />
      <rect x="567" y="1248" width="116" height="75" strokeWidth="3" />
      <path d="M607 1250 V1322 M643 1250 V1322 M567 1285 H683" strokeWidth="2.5" />
      <rect x="613" y="1255" width="24" height="22" fill="#0b0b0b" stroke="none" />
      <ellipse cx="586" cy="1285" rx="10" ry="20" strokeWidth="4" />
      <ellipse cx="664" cy="1285" rx="10" ry="20" strokeWidth="4" />
      <path d="M618 1295 h16 M618 1310 h16" strokeWidth="6" />
    </g>
  );
};

const Drawing = () => {
  const steps = [539, 689, 839, 990, 1140, 1290, 1440];
  const solid = '#2b2e33';
  const yellow = '#f4f53f';
  return (
    <CadCanvas width="2113" height="1303" viewBox="253 252 2113 1303">
      <path d="M1302.5 252 V960" stroke="#4c8f4e" strokeWidth="1.6" fill="none" />
      <path d="M1303 1394.5 H2366" stroke="#b34a4a" strokeWidth="1.6" fill="none" />
      {/* box outline */}
      <g fill="none" strokeWidth="1.5">
        <path d="M908 389 H1696 M908 1440 H1696" stroke={solid} />
        <path d="M1065 389 V422 H1223 V389 M1381 389 V422 H1539 V389 M1381 1440 V1407 H1539 V1440" stroke={solid} />
        <path d="M908 539 V689 M908 839 V990 M908 1140 V1290 M1696 539 V689 M1696 839 V990 M1696 1140 V1290" stroke={solid} />
        <path
          d={`M908 389 V${steps[0]} H941 V${steps[1]} H908 V${steps[2]} H941 V${steps[3]} H908 V${steps[4]} H941 V${steps[5]} H908 V${steps[6]}`}
          stroke={yellow}
          strokeWidth="2"
        />
        <path
          d={`M1696 389 V${steps[0]} H1663 V${steps[1]} H1696 V${steps[2]} H1663 V${steps[3]} H1696 V${steps[4]} H1663 V${steps[5]} H1696 V${steps[6]}`}
          stroke={yellow}
          strokeWidth="2"
        />
      </g>
      <Board />
      {/* cplane axes marker */}
      <path d="M290 1488 V1517 H318" stroke="#5a5f66" strokeWidth="1.4" fill="none" />
      <text x="292" y="1491" fontSize="10" fill="#50555c" fontFamily="'Liberation Sans', sans-serif">y</text>
      <text x="322" y="1520" fontSize="10" fill="#50555c" fontFamily="'Liberation Sans', sans-serif">x</text>
    </CadCanvas>
  );
};

/* ---------- logos ---------- */
const RhinoLogo = ({ size }: { size: number }) => (
  <svg width={size} height={size} viewBox="0 0 100 100">
    <rect width="100" height="100" fill="#1c1c1c" />
    <path d="M0 66 L100 66 M0 84 L100 84 M20 60 L60 100 M60 60 L20 100" stroke="#333" strokeWidth="1" />
    <path d="M6 12 L26 3 C18 16 18 26 28 34 L44 52 C48 42 58 36 72 34 L98 26 L72 52 L80 60 C86 70 88 80 84 92 L74 98 L66 88 L50 78 C30 62 10 38 6 12 Z" fill="#d8d8d8" />
    <path d="M36 3 H54 C48 12 48 20 56 30 L46 34 C36 24 32 12 36 3 Z" fill="#b4b4b4" />
    <path d="M42 56 L58 66 L50 50 Z" fill="#333" />
    <circle cx="50" cy="64" r="2.6" fill="#e02020" />
  </svg>
);

const WinIcon = () => (
  <svg width="54" height="54" viewBox="0 0 54 54">
    <path d="M1 8 L24 5 V26 H1 Z M27 4.5 L53 1 V26 H27 Z M1 29 H24 V49 L1 46 Z M27 29 H53 V53 L27 49.5 Z" fill="#fff" />
  </svg>
);
const IeIcon = () => (
  <svg width="60" height="62" viewBox="0 0 60 62">
    <circle cx="31" cy="32" r="20" fill="none" stroke="#2aa8ec" strokeWidth="11" />
    <rect x="18" y="28" width="33" height="7" fill="#2aa8ec" />
    <path d="M38 38 H56 V46 H38 Z" fill="#646464" />
    <path d="M8 55 C2 48 8 24 28 11 C42 2 56 0 58 8 C59 12 55 18 52 22 C54 14 52 8 44 9 C28 12 6 42 10 52 C12 56 18 56 24 54 C17 60 11 60 8 55 Z" fill="#f3b530" />
  </svg>
);
const FolderIcon = () => (
  <svg width="60" height="62" viewBox="0 0 60 62">
    <path d="M6 6 H22 L25 10 H52 V24 H6 Z" fill="#f2d777" stroke="#c9a94a" />
    <rect x="10" y="3" width="10" height="5" fill="#fff" stroke="#5a9a3a" />
    <path d="M12 14 H26 L29 18 H54 V30 H12 Z" fill="#f6e08c" stroke="#c9a94a" />
    <rect x="22" y="12" width="12" height="5" fill="#fff" stroke="#d85a2a" />
    <path d="M3 22 H57 L57 56 H3 Z" fill="#f7e6a2" stroke="#d2b45c" />
    <path d="M18 58 V42 L23 36 H46 L48 42 V58 H38 V48 H28 V58 Z" fill="#7cc0e0" stroke="#3f86b0" />
  </svg>
);
const ChromeIcon = () => (
  <svg width="60" height="60" viewBox="0 0 60 60">
    <circle cx="30" cy="30" r="29" fill="#f8c52f" />
    <path d="M30 1 A29 29 0 0 0 5 15.5 L17.5 37 L30 19 H55 A29 29 0 0 0 30 1 Z" fill="#df4b38" />
    <path d="M5 15.5 A29 29 0 0 0 30 59 L42.5 37 L17.5 37 Z" fill="#2fa758" />
    <circle cx="30" cy="30" r="14" fill="#fff" />
    <circle cx="30" cy="30" r="11" fill="#4c8bf0" />
  </svg>
);
const StoreIcon = () => (
  <svg width="60" height="60" viewBox="0 0 60 60">
    <rect width="60" height="60" fill="#008a00" />
    <path d="M9 20 H51 L47 50 H13 Z" fill="#fff" />
    <path d="M20 20 C20 2 40 2 40 20" fill="none" stroke="#fff" strokeWidth="2" />
    <path d="M21 26 H29 V33 H21 Z M31 26 H40 V33 H31 Z M21 35 H29 V43 H21 Z M31 35 H40 V43 H31 Z" fill="#008a00" />
  </svg>
);
const SearchIcon = () => (
  <svg width="60" height="60" viewBox="0 0 60 60">
    <rect width="60" height="60" fill="#8000ff" />
    <circle cx="35" cy="24" r="11" fill="none" stroke="#fff" strokeWidth="3.5" />
    <path d="M27 33 L17 48" stroke="#fff" strokeWidth="5" strokeLinecap="round" />
  </svg>
);
const GithubIcon = () => (
  <svg width="60" height="62" viewBox="0 0 60 62">
    <ellipse cx="30" cy="31" rx="29" ry="30" fill="#fff" />
    <ellipse cx="30" cy="31" rx="26" ry="27" fill="#7a3c9b" />
    <path d="M18 12 L23 16 C27 15 33 15 37 16 L42 12 C44 17 44 22 43 24 C46 34 40 40 34 41 C36 43 36 50 36 58 H24 C24 52 24 50 24 47 C20 48 16 46 14 41 C18 44 20 44 24 43 L26 41 C20 40 14 34 17 24 C16 22 16 17 18 12 Z" fill="#d8d3dc" />
  </svg>
);
const SublimeIcon = () => (
  <svg width="64" height="62" viewBox="0 0 64 62">
    <rect width="64" height="62" rx="6" fill="#4a4a4a" />
    <path d="M48 4 V20 L16 33 V18 Z" fill="#ff9800" />
    <path d="M16 24 L48 34 V46 L16 58 V42 L36 36 L16 30 Z" fill="#f08a00" />
  </svg>
);
const PhotoIcon = () => (
  <svg width="60" height="52" viewBox="0 0 60 52">
    <path d="M0 0 H14 V6 H6 V14 H0 Z M46 0 H60 V14 H54 V6 H46 Z M0 38 H6 V46 H14 V52 H0 Z M54 38 H60 V52 H46 V46 H54 Z" fill="#3f8fcf" />
    <rect x="3" y="3" width="54" height="46" fill="#e9e9e9" />
    <rect x="6" y="6" width="48" height="40" fill="#a8d8f5" />
    <path d="M6 18 C18 22 30 28 54 32 V36 H6 Z" fill="#4a7a56" />
    <rect x="6" y="35" width="48" height="11" fill="#8fb0cc" />
  </svg>
);
const CalcIcon = () => (
  <svg width="46" height="60" viewBox="0 0 46 60">
    <rect width="46" height="60" rx="3" fill="#8ec0e4" stroke="#4e88b6" />
    <rect x="5" y="3" width="36" height="5" fill="#f5a93c" />
    <rect x="5" y="8" width="36" height="18" fill="#dcebf6" stroke="#5f8db0" strokeWidth="0.6" />
    <text x="36" y="23" fontSize="14" fontStyle="italic" textAnchor="end" fill="#3c5f9a" fontFamily="'Liberation Sans', sans-serif">0</text>
    {[0, 1, 2, 3].map(r => [0, 1, 2, 3, 4, 5].map(c => (
      <rect key={`${r}${c}`} x={5 + c * 6} y={32 + r * 6.5} width="4.4" height="4.6" fill={c === 5 && r > 0 ? '#f0a030' : c > 3 ? '#5e94bf' : '#eef4f8'} />
    )))}
  </svg>
);

const Gear = ({ size = 14 }: { size?: number }) => (
  <svg width={size} height={size} viewBox="0 0 14 14" fill="none" stroke="#a2a6ad" strokeWidth="0.9">
    <circle cx="7" cy="7" r="4.6" strokeDasharray="2.2 1" strokeWidth="2" />
    <circle cx="7" cy="7" r="1.6" />
  </svg>
);

const Chevron = ({ dir }: { dir: 'up' | 'down' | 'left' | 'right' }) => {
  const d = { up: 'M1 8 L6 3 L11 8', down: 'M1 3 L6 8 L11 3', left: 'M8 1 L3 6 L8 11', right: 'M3 1 L8 6 L3 11' }[dir];
  return (
    <svg width="12" height="12" viewBox="0 0 12 12">
      <path d={d} fill="none" stroke="#606060" strokeWidth="2.4" />
    </svg>
  );
};

const Bulb = () => (
  <svg width="10" height="14" viewBox="0 0 10 14">
    <path d="M5 1 C1.5 1 0.5 4 2 6.5 C3 8 3 9 3 10 H7 C7 9 7 8 8 6.5 C9.5 4 8.5 1 5 1 Z" fill="#f4f48c" stroke="#5a5a18" />
    <path d="M3.5 11.5 H6.5 M4 13 H6" stroke="#333" />
  </svg>
);
const Lock = () => (
  <svg width="13" height="14" viewBox="0 0 13 14">
    <rect x="1" y="7" width="7" height="6" fill="#fff" stroke="#111" />
    <path d="M5.5 7 V3.5 C5.5 0.6 11 0.6 11 3.5 V5" fill="none" stroke="#111" />
  </svg>
);

/* ---------- data ---------- */
const menus: [string, string, string][] = [
  ['', 'F', 'ile'], ['', 'E', 'dit'], ['', 'V', 'iew'], ['', 'C', 'urve'], ['', 'S', 'urface'],
  ['S', 'o', 'lid'], ['', 'M', 'esh'], ['', 'D', 'imension'], ['', 'T', 'ransform'], ['Too', 'l', 's'],
  ['', 'A', 'nalyze'], ['', 'R', 'ender'], ['', 'P', 'anels'], ['', 'H', 'elp'],
];
const ribbonTabs: [string, number][] = [
  ['Standard', 126], ['CPlanes', 119], ['Set View', 123], ['Display', 110], ['Select', 100], ['Viewport Layout', 197],
  ['Visibility', 114], ['Transform', 135], ['Curve Tools', 155], ['Surface Tools', 172], ['Solid Tools', 147],
  ['Mesh Tools', 151], ['Render Tools', 168], ['Drafting', 114], ['New in V5', 115],
];
const snaps: { label: string; checked?: boolean; disabled?: boolean }[] = [
  { label: 'End' }, { label: 'Near' }, { label: 'Point' }, { label: 'Mid', checked: true }, { label: 'Cen' },
  { label: 'Int' }, { label: 'Perp' }, { label: 'Tan' }, { label: 'Quad' }, { label: 'Knot' }, { label: 'Vertex' },
  { label: 'Project', disabled: true }, { label: 'Disable', disabled: true },
];
const layers = [
  { name: 'Layer 04', color: '#008000' },
  { name: 'Layer 03', color: '#0000ff' },
  { name: 'Front_Back', color: '#7b28c8' },
  { name: 'Left_Right', color: '#c80000' },
  { name: 'Top_Bottom', color: '#000', selected: true },
  { name: 'Arduino', color: '#fff' },
];
const statusCells: { text: string; w: number; pad?: number }[] = [
  { text: 'CPlan', w: 67 }, { text: 'x -57.50', w: 88 }, { text: 'y 107.30', w: 88 }, { text: 'z 0.00', w: 89, pad: 12 }, { text: 'Millimet', w: 88, pad: 4 },
];
const statusToggles: { text: string; w: number; on?: boolean }[] = [
  { text: 'Grid Sn', w: 91, on: true }, { text: 'Ortho', w: 57, on: true }, { text: 'Plana', w: 64 }, { text: 'Osna', w: 65, on: true },
  { text: 'SmartTra', w: 104, on: true }, { text: 'Gumba', w: 77 }, { text: 'Record Hist', w: 131 }, { text: 'Filte', w: 54 },
];

const PanelToolIcons = [
  <svg key="1" width="14" height="18" viewBox="0 0 14 18"><path d="M2 1 H9 L12 4 V17 H2 Z" fill="#fff" stroke="#222" /></svg>,
  <svg key="2" width="16" height="18" viewBox="0 0 16 18"><path d="M2 1 H8 V12 H2 Z M7 6 H11 L14 9 V17 H7 Z" fill="#fff" stroke="#222" /></svg>,
  <svg key="3" width="16" height="16" viewBox="0 0 16 16"><path d="M2 2 L14 14 M14 2 L2 14" stroke="#333" strokeWidth="3" /></svg>,
  <svg key="4" width="16" height="10" viewBox="0 0 16 10"><path d="M8 1 L15 8 H1 Z" fill="#777" stroke="#333" /></svg>,
  <svg key="5" width="16" height="10" viewBox="0 0 16 10"><path d="M8 9 L15 2 H1 Z" fill="#999" stroke="#333" /></svg>,
  <svg key="6" width="10" height="16" viewBox="0 0 10 16"><path d="M1 8 L9 1 V15 Z" fill="#bbb" stroke="#aaa" /></svg>,
  <svg key="7" width="14" height="16" viewBox="0 0 14 16"><path d="M1 1 H13 L8.5 7 V14 L5.5 15 V7 Z" fill="#777" stroke="#333" /></svg>,
  <svg key="8" width="12" height="16" viewBox="0 0 12 16"><path d="M1 1 H11 V15 H1 Z M6 1 V15 M1 7 H11" fill="#ddd" stroke="#aaa" strokeWidth="1.4" /></svg>,
  <svg key="9" width="16" height="16" viewBox="0 0 16 16"><path d="M8 1 L15 5 L12 8 L9 6 L3 14 L1 13 L7 4 L5 2 Z" fill="#777" stroke="#333" /></svg>,
  <svg key="10" width="15" height="15" viewBox="0 0 15 15"><circle cx="7.5" cy="7.5" r="7" fill="#777" /><text x="7.5" y="11.5" textAnchor="middle" fontSize="11" fontWeight="700" fill="#fff" fontFamily="'Liberation Sans', sans-serif">?</text></svg>,
];

export default function App() {
  return (
    <Root>
      <GlobalStyle />
      <TitleBar>
        <TitleLeft><RhinoLogo size={32} /></TitleLeft>
        <TitleText>IoE_Arduino_Box (31287 KB) - Rhinoceros Corporate (64-bit) - [Top]</TitleText>
        <WindowButtons>
          <WindowButton>
            <svg width="18" height="6" viewBox="0 0 18 6"><rect y="1" width="17" height="3" fill="#2a2a2a" /></svg>
          </WindowButton>
          <WindowButton>
            <svg width="20" height="18" viewBox="0 0 20 18" fill="none" stroke="#2a2a2a" strokeWidth="2"><path d="M4 3 V1 H19 V12 H16" /><rect x="1" y="4" width="15" height="13" /><path d="M1 6 H16" strokeWidth="3" /></svg>
          </WindowButton>
          <WindowButton $close>
            <svg width="16" height="16" viewBox="0 0 16 16"><path d="M2 2 L14 14 M14 2 L2 14" stroke="#fff" strokeWidth="2.4" /></svg>
          </WindowButton>
        </WindowButtons>
      </TitleBar>

      <MenuBar>
        {menus.map(([a, b, c]) => (
          <MenuItem key={a + b + c}>{a}<u>{b}</u>{c}</MenuItem>
        ))}
      </MenuBar>

      <CommandArea>
        <History>
          <HistoryLines>
            <div>1 curve added to selection.</div>
            <div>1 curve added to selection.</div>
          </HistoryLines>
          <HistoryScroll>
            <Chevron dir="up" />
            <Chevron dir="down" />
          </HistoryScroll>
        </History>
        <CommandLine>
          Command:<Caret />
          <Spinner>
            <SpinHalf />
            <SpinHalf $down />
          </Spinner>
        </CommandLine>
      </CommandArea>

      <TabRow>
        {ribbonTabs.map(([t, w], i) => (
          <RibbonTab
            key={t}
            $w={w}
            $active={t === 'CPlanes'}
            $square={i === 0 ? 'first' : i === ribbonTabs.length - 1 ? 'last' : undefined}
          >
            {t}
          </RibbonTab>
        ))}
        <RibbonGear><Gear size={16} /></RibbonGear>
      </TabRow>

      <Toolbar>
        {toolbarGroups.map((group, i) => (
          <React.Fragment key={i}>
            {i > 0 && <ToolSep />}
            {group.map((icon, j) => <ToolCell key={j}>{icon}</ToolCell>)}
          </React.Fragment>
        ))}
      </Toolbar>

      <Main>
        <LeftPanel>
          <GripLine />
          <ToolGrid>
            {panelTools.map((t, i) => (
              <PanelTool key={i} $flyout={t.flyout}>{t.icon}</PanelTool>
            ))}
          </ToolGrid>
        </LeftPanel>

        <Center>
          <Viewport>
            <Drawing />
            <ViewLabel>
              Top
              <LabelBar />
              <LabelArrow />
            </ViewLabel>
          </Viewport>
          <ViewTabs>
            <ViewTab $kind="first">Perspective</ViewTab>
            <ViewTab $kind="active">Top</ViewTab>
            <ViewTab $kind="plain">Front</ViewTab>
            <ViewTab $kind="plain">Right</ViewTab>
            <PlusTab viewBox="0 0 78 84">
              <path d="M0 42 L40 83 H72 Q77 83 77 78 V0" fill="none" stroke="#c2c7d4" strokeWidth="1.4" />
              <path d="M46 42 h6 M49 39 v6" stroke="#777" strokeWidth="2" />
            </PlusTab>
          </ViewTabs>
        </Center>

        <RightPanel>
          <PanelTabs>
            <PanelTab>
              <svg width="16" height="16" viewBox="0 0 16 16"><circle cx="8" cy="8" r="6" fill="none" stroke="#d33" strokeWidth="3" /><path d="M8 2 A6 6 0 0 1 14 8" fill="none" stroke="#e8c020" strokeWidth="3" /><path d="M14 8 A6 6 0 0 1 8 14" fill="none" stroke="#30a050" strokeWidth="3" /><path d="M8 14 A6 6 0 0 1 2 8" fill="none" stroke="#3060d0" strokeWidth="3" /></svg>
              Prop...
            </PanelTab>
            <PanelTab $active>
              <svg width="17" height="18" viewBox="0 0 17 18"><path d="M1 1 L16 3 L14 11 L8 17 L2 12 Z" fill="#3d5fb8" stroke="#223" /><path d="M1 1 L16 3 L14 7 L2 5 Z" fill="#e0502a" /><path d="M2 5 L14 7 L13.5 9 L2.5 7.5 Z" fill="#fff" /></svg>
              Layers
            </PanelTab>
            <PanelTab>
              <svg width="16" height="16" viewBox="0 0 16 16"><rect x="1" y="1" width="14" height="11" fill="#999" stroke="#111" strokeWidth="1.5" /><path d="M5 15 H11" stroke="#111" strokeWidth="2" /></svg>
              Displ...
            </PanelTab>
            <PanelTab>
              <svg width="16" height="16" viewBox="0 0 16 16"><rect x="1" y="1" width="14" height="14" fill="#ced6ea" stroke="#556" /><circle cx="8" cy="9" r="5" fill="#2a60c8" /><text x="8" y="12.5" textAnchor="middle" fontSize="9" fontWeight="700" fill="#fff" fontFamily="'Liberation Sans', sans-serif">?</text></svg>
              Help
            </PanelTab>
            <PanelTab>
              <svg width="17" height="12" viewBox="0 0 17 12"><rect width="17" height="12" fill="#111" /><path d="M2 3 h3 v2 h-3 v4 M7 3 h3 M7 3 v6 h3 M12 9 V3 h3 v3 h-3" fill="none" stroke="#ddd" strokeWidth="0.8" /></svg>
              Gras...
            </PanelTab>
            <PanelGear><Gear size={16} /></PanelGear>
          </PanelTabs>
          <PanelTools>
            {PanelToolIcons.map((icon, i) => <PanelToolCell key={i}>{icon}</PanelToolCell>)}
          </PanelTools>
          <LayerTable>
            <LayerRow $header>
              <HeadCell $pad="0 0 0 7px">Name</HeadCell>
              <HeadCell $pad="0 0 0 7px">Cu...</HeadCell>
              <HeadCell $align="center">On</HeadCell>
              <HeadCell $align="center">Lock</HeadCell>
              <HeadCell $align="flex-end" $pad="0 14px 0 0">Color</HeadCell>
            </LayerRow>
            {layers.map(l => (
              <LayerRow key={l.name} $selected={l.selected}>
                <NameCell $selected={l.selected}>{l.name}</NameCell>
                <IconCell>
                  {l.selected && (
                    <svg width="11" height="11" viewBox="0 0 11 11"><path d="M1 6 L4 9 L10 2" fill="none" stroke="#000" strokeWidth="2.2" /><path d="M1 6 L4 9 L10 2" fill="none" stroke="#fff" strokeWidth="0.8" /></svg>
                  )}
                </IconCell>
                <IconCell>{!l.selected && <Bulb />}</IconCell>
                <IconCell>{!l.selected && <Lock />}</IconCell>
                <ColorCell><Swatch $color={l.color} $light={l.selected} /></ColorCell>
              </LayerRow>
            ))}
          </LayerTable>
          <HScroll>
            <HArrow><Chevron dir="left" /></HArrow>
            <HThumb />
            <HArrow><Chevron dir="right" /></HArrow>
          </HScroll>
        </RightPanel>
      </Main>

      <OsnapRow>
        {snaps.map(s => (
          <SnapItem key={s.label}>
            <SnapBox $disabled={s.disabled}>
              {s.checked && (
                <svg width="20" height="26" viewBox="0 0 20 26"><path d="M1 14 L6 10 L9 16 L15 1 L19 2 L11 25 L7 25 Z" fill="#000" /></svg>
              )}
            </SnapBox>
            {s.label}
          </SnapItem>
        ))}
      </OsnapRow>

      <StatusBar>
        {statusCells.map(c => (
          <StatusCell key={c.text} $w={c.w} $pad={c.pad}>{c.text}</StatusCell>
        ))}
        <StatusCell $w={173}>
          <LayerChip />
          Top_Bottom
        </StatusCell>
        {statusToggles.map(c => (
          <StatusCell key={c.text} $w={c.w} $on={c.on}>{c.text}</StatusCell>
        ))}
        <StatusCell $fill>Memory use: 468 MB</StatusCell>
      </StatusBar>

      <Taskbar>
        <TaskSlot $w={96}><WinIcon /></TaskSlot>
        <TaskSlot $w={102}><IeIcon /></TaskSlot>
        <TaskButton $w={95} $gap={3}><FolderIcon /></TaskButton>
        <TaskButton $w={5} $gap={3} />
        <TaskButton><ChromeIcon /></TaskButton>
        <TaskButton><StoreIcon /></TaskButton>
        <TaskButton><SearchIcon /></TaskButton>
        <TaskButton><GithubIcon /></TaskButton>
        <TaskButton><SublimeIcon /></TaskButton>
        <TaskButton $active><RhinoLogo size={64} /></TaskButton>
        <TaskButton><PhotoIcon /></TaskButton>
        <TaskButton $gap={0}><CalcIcon /></TaskButton>
        <Tray>
          <TrayText>Start Menu</TrayText>
          <TrayChevron>»</TrayChevron>
          <TrayIcon $gap={44}>
            <svg width="14" height="10" viewBox="0 0 14 10"><path d="M7 1 L13 9 H1 Z" fill="#dfe2ea" /></svg>
          </TrayIcon>
          <TrayIcon $gap={17}>
            <svg width="32" height="24" viewBox="0 0 32 24"><path d="M1 18 h4 v5 h-4 Z M8 14 h4 v9 h-4 Z M15 9 h4 v14 h-4 Z M22 3 h6 v20 h-6 Z" fill="#fff" stroke="#2a2a2a" /></svg>
          </TrayIcon>
          <TrayIcon $gap={17}>
            <svg width="30" height="32" viewBox="0 0 30 32"><path d="M3 1 V8 M8 1 V8 M1 8 H10 V15 H6.5 V31 H4.5 V15 H1 Z" fill="#fff" stroke="#2a2a2a" /><rect x="14" y="4" width="15" height="27" fill="#2a2a2a" stroke="#fff" /><rect x="18" y="8" width="7" height="19" fill="#646464" stroke="#fff" strokeWidth="1.5" /></svg>
          </TrayIcon>
          <TrayIcon $gap={16}>
            <svg width="32" height="32" viewBox="0 0 32 32"><path d="M2 1 V31" stroke="#fff" strokeWidth="3" /><path d="M4 2 C12 0 16 5 30 7 C26 11 26 14 30 18 C20 20 12 14 4 18 Z" fill="#fff" stroke="#2a2a2a" /></svg>
          </TrayIcon>
          <TrayIcon $gap={26}>
            <svg width="32" height="32" viewBox="0 0 32 32"><path d="M1 11 H7 L15 2 V30 L7 21 H1 Z" fill="#fff" stroke="#2a2a2a" /><path d="M18 12 C20 14 20 18 18 20 M21 8 C25 12 25 20 21 24 M25 4 C31 10 31 22 25 28" fill="none" stroke="#ddd" strokeWidth="1.2" /></svg>
          </TrayIcon>
          <TrayText $gap={30}>ENG</TrayText>
          <Clock>
            <span>10:52</span>
            <span>24/01/2018</span>
          </Clock>
        </Tray>
      </Taskbar>
    </Root>
  );
}
